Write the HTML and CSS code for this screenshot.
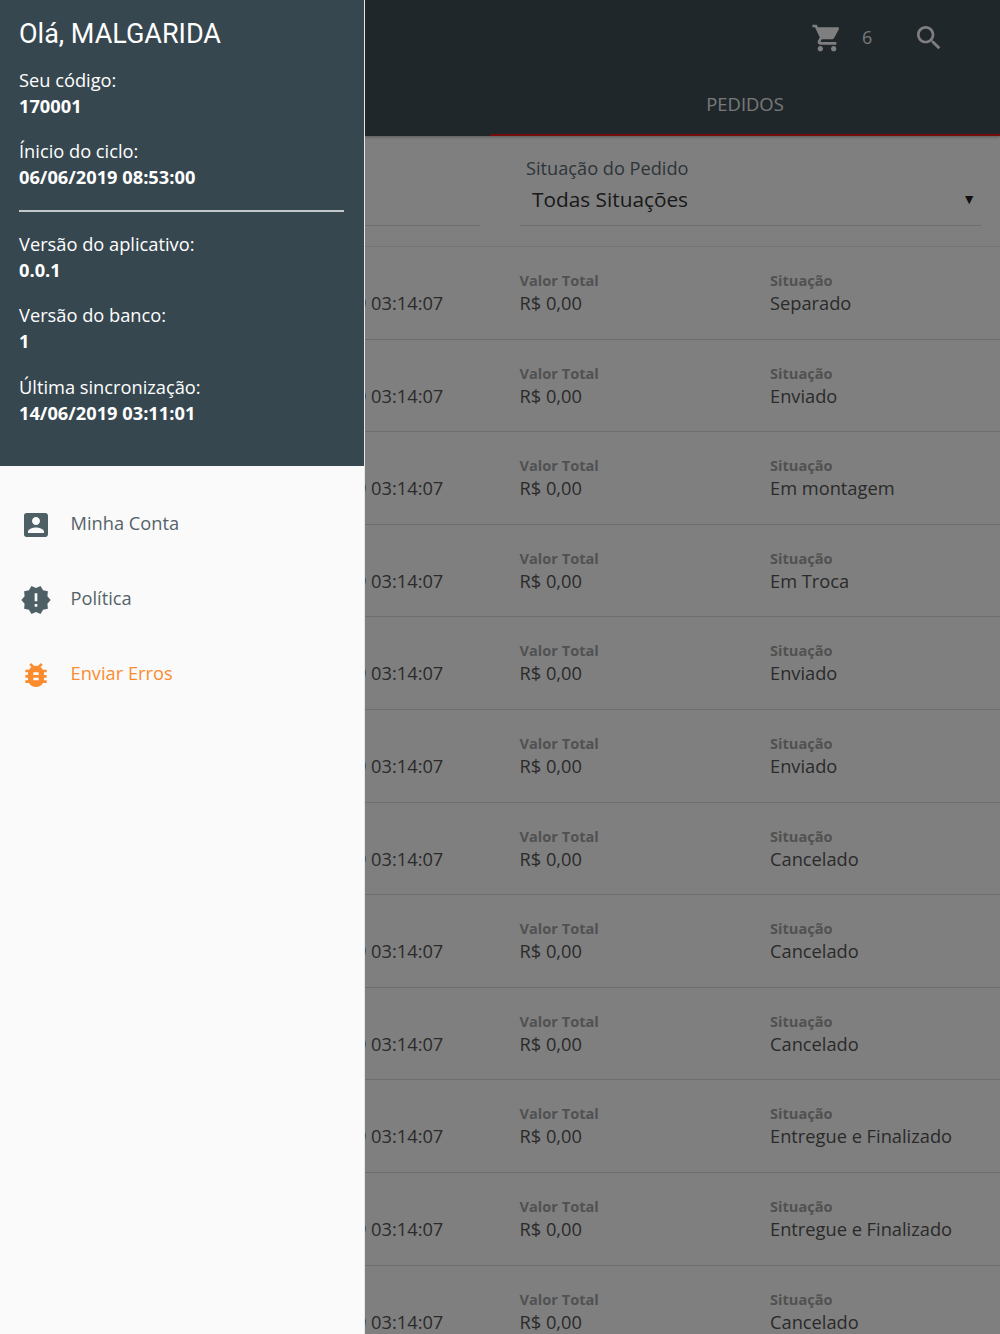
FILE: index.html
```html
<!DOCTYPE html>
<html lang="pt">
<head>
<meta charset="utf-8">
<title>Pedidos</title>
<link rel="stylesheet" href="styles.css">
</head>
<body>
<div class="app">
  <header class="header">
    <div class="toolbar">
      <svg class="icon-cart" viewBox="0 0 24 24"><path d="M7 18c-1.1 0-1.99.9-1.99 2S5.900 22 7 22s2-.9 2-2-.9-2-2-2zM1 2v2h2l3.600 7.590-1.350 2.450c-.16.280-.25.610-.25.960 0 1.100.9 2 2 2h12v-2H7.420c-.14 0-.25-.11-.25-.25l.030-.12.9-1.630h7.450c.75 0 1.410-.41 1.750-1.030l3.580-6.490c.08-.14.120-.31.120-.48 0-.55-.45-1-1-1H5.210l-.94-2H1zm16 16c-1.100 0-1.990.9-1.990 2s.89 2 1.990 2 2-.9 2-2-.9-2-2-2z"/></svg>
      <span class="cart-count">6</span>
      <svg class="icon-search" viewBox="0 0 24 24"><path d="M15.500 14h-.79l-.28-.27C15.410 12.590 16 11.110 16 9.500 16 5.910 13.090 3 9.500 3S3 5.910 3 9.500 5.910 16 9.500 16c1.610 0 3.090-.59 4.230-1.570l.27.28v.79l5 4.990L20.490 19l-4.990-5zm-6 0C7.010 14 5 11.990 5 9.500S7.010 5 9.500 5 14 7.010 14 9.500 11.990 14 9.500 14z"/></svg>
    </div>
    <nav class="tabs">
      <span class="tab"></span>
      <span class="tab tab-active">PEDIDOS</span>
    </nav>
  </header>

  <section class="filters">
    <div class="field"></div>
    <div class="field">
      <div class="field-label">Situação do Pedido</div>
      <div class="field-value"><span>Todas Situações</span><span class="caret">▼</span></div>
    </div>
  </section>

  <main class="list">
    <div class="row"><div></div><div class="cell"><span class="value">14/06/2019 03:14:07</span></div><div class="cell"><span class="label">Valor Total</span><span class="value">R$ 0,00</span></div><div class="cell"><span class="label">Situação</span><span class="value">Separado</span></div></div>
    <div class="row"><div></div><div class="cell"><span class="value">14/06/2019 03:14:07</span></div><div class="cell"><span class="label">Valor Total</span><span class="value">R$ 0,00</span></div><div class="cell"><span class="label">Situação</span><span class="value">Enviado</span></div></div>
    <div class="row"><div></div><div class="cell"><span class="value">14/06/2019 03:14:07</span></div><div class="cell"><span class="label">Valor Total</span><span class="value">R$ 0,00</span></div><div class="cell"><span class="label">Situação</span><span class="value">Em montagem</span></div></div>
    <div class="row"><div></div><div class="cell"><span class="value">14/06/2019 03:14:07</span></div><div class="cell"><span class="label">Valor Total</span><span class="value">R$ 0,00</span></div><div class="cell"><span class="label">Situação</span><span class="value">Em Troca</span></div></div>
    <div class="row"><div></div><div class="cell"><span class="value">14/06/2019 03:14:07</span></div><div class="cell"><span class="label">Valor Total</span><span class="value">R$ 0,00</span></div><div class="cell"><span class="label">Situação</span><span class="value">Enviado</span></div></div>
    <div class="row"><div></div><div class="cell"><span class="value">14/06/2019 03:14:07</span></div><div class="cell"><span class="label">Valor Total</span><span class="value">R$ 0,00</span></div><div class="cell"><span class="label">Situação</span><span class="value">Enviado</span></div></div>
    <div class="row"><div></div><div class="cell"><span class="value">14/06/2019 03:14:07</span></div><div class="cell"><span class="label">Valor Total</span><span class="value">R$ 0,00</span></div><div class="cell"><span class="label">Situação</span><span class="value">Cancelado</span></div></div>
    <div class="row"><div></div><div class="cell"><span class="value">14/06/2019 03:14:07</span></div><div class="cell"><span class="label">Valor Total</span><span class="value">R$ 0,00</span></div><div class="cell"><span class="label">Situação</span><span class="value">Cancelado</span></div></div>
    <div class="row"><div></div><div class="cell"><span class="value">14/06/2019 03:14:07</span></div><div class="cell"><span class="label">Valor Total</span><span class="value">R$ 0,00</span></div><div class="cell"><span class="label">Situação</span><span class="value">Cancelado</span></div></div>
    <div class="row"><div></div><div class="cell"><span class="value">14/06/2019 03:14:07</span></div><div class="cell"><span class="label">Valor Total</span><span class="value">R$ 0,00</span></div><div class="cell"><span class="label">Situação</span><span class="value">Entregue e Finalizado</span></div></div>
    <div class="row"><div></div><div class="cell"><span class="value">14/06/2019 03:14:07</span></div><div class="cell"><span class="label">Valor Total</span><span class="value">R$ 0,00</span></div><div class="cell"><span class="label">Situação</span><span class="value">Entregue e Finalizado</span></div></div>
    <div class="row"><div></div><div class="cell"><span class="value">14/06/2019 03:14:07</span></div><div class="cell"><span class="label">Valor Total</span><span class="value">R$ 0,00</span></div><div class="cell"><span class="label">Situação</span><span class="value">Cancelado</span></div></div>
  </main>

  <div class="backdrop"></div>

  <aside class="drawer">
    <div class="drawer-head">
      <h1 class="greeting">Olá, MALGARIDA</h1>
      <dl class="info">
        <dt>Seu código:</dt><dd>170001</dd>
        <dt>Ínicio do ciclo:</dt><dd>06/06/2019 08:53:00</dd>
      </dl>
      <hr class="divider">
      <dl class="info">
        <dt>Versão do aplicativo:</dt><dd>0.0.1</dd>
        <dt>Versão do banco:</dt><dd>1</dd>
        <dt>Última sincronização:</dt><dd>14/06/2019 03:11:01</dd>
      </dl>
    </div>
    <nav class="menu">
      <a class="menu-item">
        <svg class="menu-icon" viewBox="0 0 24 24"><path d="M3 5v14a2 2 0 0 0 2 2h14c1.100 0 2-.9 2-2V5c0-1.100-.9-2-2-2H5a2 2 0 0 0-2 2zm12 4c0 1.660-1.340 3-3 3s-3-1.340-3-3 1.340-3 3-3 3 1.340 3 3zm-9 8c0-2 4-3.100 6-3.100s6 1.100 6 3.100v1H6v-1z"/></svg>
        <span>Minha Conta</span>
      </a>
      <a class="menu-item">
        <svg class="menu-icon" viewBox="0 0 24 24"><path d="M23 12l-2.440-2.790.34-3.690-3.610-.82-1.890-3.200L12 2.960 8.600 1.500 6.710 4.690 3.100 5.500l.34 3.700L1 12l2.440 2.790-.34 3.700 3.610.82L8.600 22.500l3.400-1.470 3.400 1.460 1.890-3.190 3.610-.82-.34-3.690L23 12zm-10 5h-2v-2h2v2zm0-4h-2V7h2v6z"/></svg>
        <span>Política</span>
      </a>
      <a class="menu-item menu-item-active">
        <svg class="menu-icon" viewBox="0 0 24 24"><path d="M20 8h-2.810c-.45-.78-1.070-1.450-1.820-1.960L17 4.410 15.590 3l-2.170 2.170C12.960 5.060 12.490 5 12 5s-.96.060-1.410.17L8.410 3 7 4.410l1.620 1.630C7.880 6.550 7.260 7.220 6.810 8H4v2h2.090c-.05.330-.09.660-.09 1v1H4v2h2v1c0 .34.040.67.090 1H4v2h2.810c1.040 1.790 2.970 3 5.190 3s4.150-1.210 5.190-3H20v-2h-2.090c.05-.33.090-.66.090-1v-1h2v-2h-2v-1c0-.34-.04-.67-.09-1H20V8zm-6 8h-4v-2h4v2zm0-4h-4v-2h4v2z"/></svg>
        <span>Enviar Erros</span>
      </a>
    </nav>
  </aside>
</div>
</body>
</html>
```
FILE: styles.css
```css
* { box-sizing: border-box; }
html, body { margin: 0; padding: 0; }
body { font-family: "Open Sans", sans-serif; background: #fff; color: #333; }
.app { position: relative; width: 1000px; height: 1334px; overflow: hidden; background: #fff; }

.header { height: 136px; background: #3e4e56; display: flex; flex-direction: column; box-shadow: 0 1px 3px rgba(0,0,0,.3); position: relative; }
.toolbar { height: 75px; display: flex; align-items: center; justify-content: flex-end; color: #fff; padding-right: 55px; }
.icon-cart { width: 32px; height: 32px; fill: #fff; margin-right: 2px; }
.cart-count { font-size: 18px; width: 22px; margin-left: 17px; margin-bottom: 2px; opacity: .9; }
.icon-search { width: 32px; height: 32px; fill: #fff; margin-left: 29px; }
.tabs { flex: 1; display: grid; grid-template-columns: 490px 1fr; }
.tab { display: flex; align-items: center; justify-content: center; color: #fff; font-size: 18.4px; padding-bottom: 3px; }
.tab-active { border-bottom: 2px solid #e81818; color: #f0f0f0; }

.filters { display: grid; grid-template-columns: 1fr 1fr; gap: 40px; padding: 0 19px 0 19px; height: 89.5px; }
.field { border-bottom: 1px solid #ddd; padding-top: 20px; }
.field-label { font-size: 18.2px; line-height: 24px; color: #5b6b73; padding-left: 6px; }
.field-value { display: flex; justify-content: space-between; align-items: center; font-size: 20.8px; line-height: 30px; color: #333; padding: 4px 5px 0 12px; }
.caret { font-size: 14px; color: #222; line-height: 12px; }

.list { margin-top: 20.5px; border-top: 1px solid #e8e8e8; }
.row { height: 92.62px; display: grid; grid-template-columns: 250.5px 250px 250.5px 1fr; padding-left: 19px; border-bottom: 1px solid #ddd; align-content: start; padding-top: 23px; }
.cell { display: flex; flex-direction: column; justify-content: flex-end; }
.label { font-size: 14.6px; font-weight: 700; line-height: 20px; color: #a3a3a3; }
.value { font-size: 18.25px; line-height: 25px; color: #555; white-space: nowrap; }

.backdrop { position: absolute; inset: 0; background: rgba(0,0,0,.5); }

.drawer { position: absolute; left: 0; top: 0; bottom: 0; width: 365px; background: #fafafa; border-right: 1px solid #e5e5e5; }
.drawer-head { height: 466px; background: #37474f; color: #fff; padding: 16px 20px 0 19px; }
.greeting { font-family: Roboto, sans-serif; font-weight: 400; font-size: 27px; line-height: 36px; margin: 0 0 14.5px; }
.info { margin: 0; font-size: 18.25px; }
.info dt { line-height: 26px; }
.info dd { margin: 0 0 19.5px; font-weight: 700; line-height: 26px; }
.divider { border: 0; height: 2px; background: #c3c8ca; margin: 2px 0 19px; }

.menu { display: flex; flex-direction: column; padding-top: 21px; }
.menu-item { display: flex; align-items: flex-start; height: 75px; padding-left: 20px; color: #546269; font-size: 18.25px; line-height: 32px; }
.menu-item span { margin-left: 18.5px; padding-top: 20px; }
.menu-icon { width: 32px; height: 32px; fill: #4f5f66; margin-top: 22px; }
.menu-item-active { color: #fb8c2e; }
.menu-item-active .menu-icon { fill: #fb8c2e; }
```
